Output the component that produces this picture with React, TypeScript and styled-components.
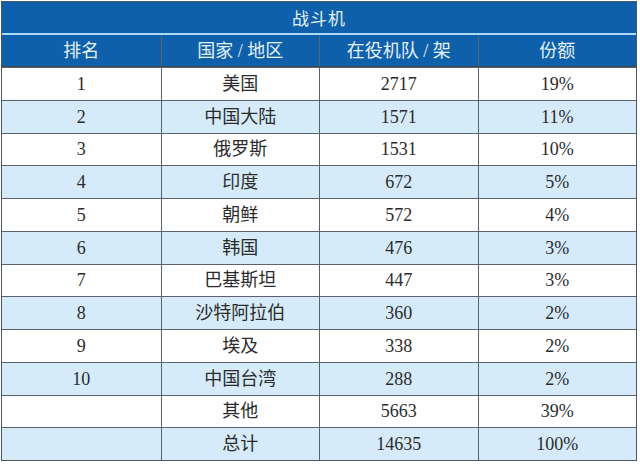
import React from "react";
import styled, { createGlobalStyle } from "styled-components";

const Global = createGlobalStyle`
  html, body { margin: 0; padding: 0; background: #ffffff; }
  body { font-family: "Liberation Serif", "Noto Sans CJK SC", serif; }
`;

const Frame = styled.div`
  box-sizing: border-box;
  width: 636px;
  margin: 1px 0 0 1px;
  border: 1px solid #4b5660;
  display: flex;
  flex-direction: column;
`;

const TitleBar = styled.div`
  height: 31px;
  background: #0e60aa;
  border-bottom: 2px solid #a9dcf4;
  color: #e4f2fb;
  font-size: 17px;
  display: flex;
  align-items: center;
  justify-content: center;
  letter-spacing: 1px;
`;

const Row = styled.div<{ $kind: "head" | "white" | "blue" }>`
  box-sizing: border-box;
  display: grid;
  grid-template-columns: repeat(4, 1fr);
  height: ${(p) => (p.$kind === "head" ? "32px" : "32.75px")};
  background: ${(p) =>
    p.$kind === "head" ? "#0e60aa" : p.$kind === "blue" ? "#d5ebf9" : "#ffffff"};
  color: ${(p) => (p.$kind === "head" ? "#e4f2fb" : "#2b2b2b")};
  border-bottom: ${(p) => (p.$kind === "head" ? "1px solid #3a4650" : "none")};
  & + & {
    border-top: ${(p) => (p.$kind === "head" ? "none" : "1px solid #5a636b")};
  }
`;

const Cell = styled.div<{ $head?: boolean }>`
  display: flex;
  align-items: center;
  justify-content: center;
  font-size: 18px;
  line-height: 1;
  & + & {
    border-left: 1px solid ${(p) => (p.$head ? "#9fd4f0" : "#5a636b")};
  }
`;

const rows: [string, string, string, string][] = [
  ["1", "美国", "2717", "19%"],
  ["2", "中国大陆", "1571", "11%"],
  ["3", "俄罗斯", "1531", "10%"],
  ["4", "印度", "672", "5%"],
  ["5", "朝鲜", "572", "4%"],
  ["6", "韩国", "476", "3%"],
  ["7", "巴基斯坦", "447", "3%"],
  ["8", "沙特阿拉伯", "360", "2%"],
  ["9", "埃及", "338", "2%"],
  ["10", "中国台湾", "288", "2%"],
  ["", "其他", "5663", "39%"],
  ["", "总计", "14635", "100%"],
];

export default function App() {
  return (
    <>
      <Global />
      <Frame>
        <TitleBar>战斗机</TitleBar>
        <Row $kind="head">
          {["排名", "国家 / 地区", "在役机队 / 架", "份额"].map((h) => (
            <Cell $head key={h}>
              {h}
            </Cell>
          ))}
        </Row>
        {rows.map((r, i) => (
          <Row key={i} $kind={i % 2 === 0 ? "white" : "blue"}>
            {r.map((c, j) => (
              <Cell key={j}>{c}</Cell>
            ))}
          </Row>
        ))}
      </Frame>
    </>
  );
}
